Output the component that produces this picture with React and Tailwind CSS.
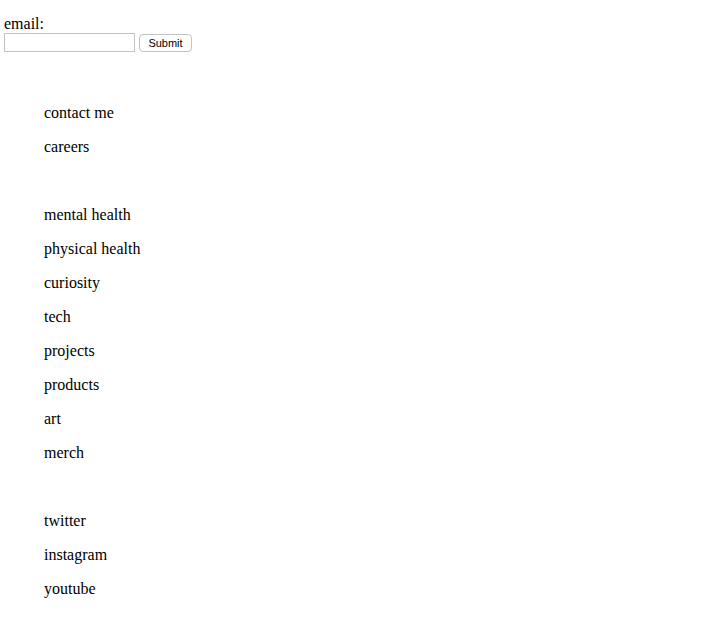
import React from 'react';

const groups = [
  ['contact me', 'careers'],
  ['mental health', 'physical health', 'curiosity', 'tech', 'projects', 'products', 'art', 'merch'],
  ['twitter', 'instagram', 'youtube'],
];

const App = () => {
  return (
    <div className="min-h-[625px] bg-white text-black font-['Liberation_Serif','Times_New_Roman',serif] text-[16px] leading-[18px] pl-[4px] pt-[15px]">
      <form onSubmit={(e) => e.preventDefault()}>
        <label className="block">email:</label>
        <div className="flex items-center gap-[4px]">
          <input
            type="text"
            className="w-[131px] h-[19px] border border-[#c3c3c3] bg-white outline-none"
          />
          <button
            type="submit"
            className="w-[53px] h-[18px] border border-[#c3c3c3] rounded-[4px] bg-white font-['Liberation_Sans',Arial,sans-serif] text-[11px] leading-[16px] text-center"
          >
            Submit
          </button>
        </div>
      </form>

      <div className="mt-[52px] pl-[40px] flex flex-col gap-[50px]">
        {groups.map((items, i) => (
          <ul key={i} className="flex flex-col gap-[16px]">
            {items.map((item) => (
              <li key={item}>{item}</li>
            ))}
          </ul>
        ))}
      </div>
    </div>
  );
};

export default App;
